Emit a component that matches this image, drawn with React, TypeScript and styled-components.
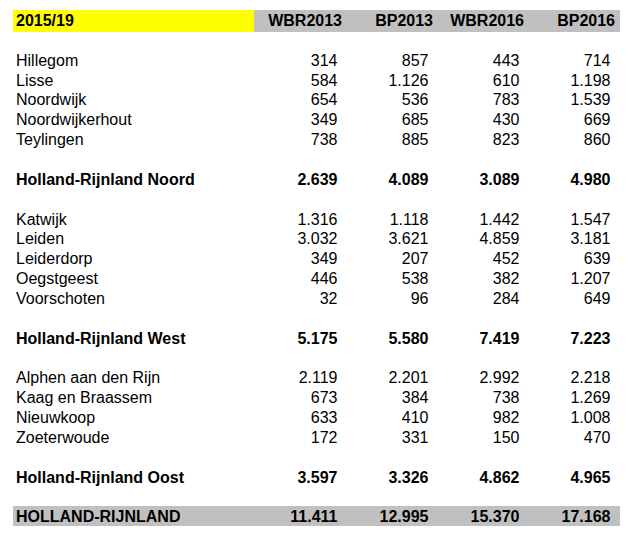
import styled, { createGlobalStyle } from "styled-components";

interface Municipality {
  name: string;
  values: string[];
}

interface Region {
  name: string;
  rows: Municipality[];
  total: string[];
}

const regions: Region[] = [
  {
    name: "Holland-Rijnland Noord",
    rows: [
      { name: "Hillegom", values: ["314", "857", "443", "714"] },
      { name: "Lisse", values: ["584", "1.126", "610", "1.198"] },
      { name: "Noordwijk", values: ["654", "536", "783", "1.539"] },
      { name: "Noordwijkerhout", values: ["349", "685", "430", "669"] },
      { name: "Teylingen", values: ["738", "885", "823", "860"] },
    ],
    total: ["2.639", "4.089", "3.089", "4.980"],
  },
  {
    name: "Holland-Rijnland West",
    rows: [
      { name: "Katwijk", values: ["1.316", "1.118", "1.442", "1.547"] },
      { name: "Leiden", values: ["3.032", "3.621", "4.859", "3.181"] },
      { name: "Leiderdorp", values: ["349", "207", "452", "639"] },
      { name: "Oegstgeest", values: ["446", "538", "382", "1.207"] },
      { name: "Voorschoten", values: ["32", "96", "284", "649"] },
    ],
    total: ["5.175", "5.580", "7.419", "7.223"],
  },
  {
    name: "Holland-Rijnland Oost",
    rows: [
      { name: "Alphen aan den Rijn", values: ["2.119", "2.201", "2.992", "2.218"] },
      { name: "Kaag en Braassem", values: ["673", "384", "738", "1.269"] },
      { name: "Nieuwkoop", values: ["633", "410", "982", "1.008"] },
      { name: "Zoeterwoude", values: ["172", "331", "150", "470"] },
    ],
    total: ["3.597", "3.326", "4.862", "4.965"],
  },
];

const columns = ["WBR2013", "BP2013", "WBR2016", "BP2016"];
const grandTotal = ["11.411", "12.995", "15.370", "17.168"];

const GlobalStyle = createGlobalStyle`
  body {
    margin: 0;
    background: #ffffff;
    font-family: "Liberation Sans", Arial, sans-serif;
    color: #000000;
  }
`;

const Sheet = styled.div`
  padding: 10px 0 0 13px;
  display: flex;
  flex-direction: column;
`;

type RowKind = "header" | "data" | "subtotal" | "total";

const Row = styled.div<{ $kind: RowKind }>`
  display: grid;
  grid-template-columns: 241px 90px 91px 91px 91px;
  box-sizing: border-box;
  width: 607px;
  padding-right: 3px;
  padding-top: ${(p) => (p.$kind === "header" ? "0" : "1px")};
  height: ${(p) => (p.$kind === "header" ? "21.7px" : "19.87px")};
  line-height: ${(p) => (p.$kind === "header" ? "21.7px" : "19.87px")};
  font-size: 16px;
  font-weight: ${(p) => (p.$kind === "data" ? 400 : 700)};
  background: ${(p) =>
    p.$kind === "header" || p.$kind === "total" ? "#c0c0c0" : "transparent"};
  white-space: nowrap;
`;

const Spacer = styled.div<{ $size?: number }>`
  height: ${(p) => p.$size ?? 19.87}px;
`;

const Label = styled.div<{ $highlight?: boolean }>`
  padding-left: 3px;
  background: ${(p) => (p.$highlight ? "#ffff00" : "transparent")};
`;

const Num = styled.div<{ $head?: boolean }>`
  text-align: right;
  padding-right: ${(p) => (p.$head ? "2px" : "6.5px")};
`;

function App() {
  return (
    <>
      <GlobalStyle />
      <Sheet>
        <Row $kind="header">
          <Label $highlight>2015/19</Label>
          {columns.map((c) => (
            <Num key={c} $head>
              {c}
            </Num>
          ))}
        </Row>
        <Spacer $size={18.04} />
        {regions.map((region) => (
          <div key={region.name}>
            {region.rows.map((row) => (
              <Row $kind="data" key={row.name}>
                <Label>{row.name}</Label>
                {row.values.map((v, i) => (
                  <Num key={i}>{v}</Num>
                ))}
              </Row>
            ))}
            <Spacer />
            <Row $kind="subtotal">
              <Label>{region.name}</Label>
              {region.total.map((v, i) => (
                <Num key={i}>{v}</Num>
              ))}
            </Row>
            <Spacer />
          </div>
        ))}
        <Row $kind="total">
          <Label>HOLLAND-RIJNLAND</Label>
          {grandTotal.map((v, i) => (
            <Num key={i}>{v}</Num>
          ))}
        </Row>
      </Sheet>
    </>
  );
}

export default App;
